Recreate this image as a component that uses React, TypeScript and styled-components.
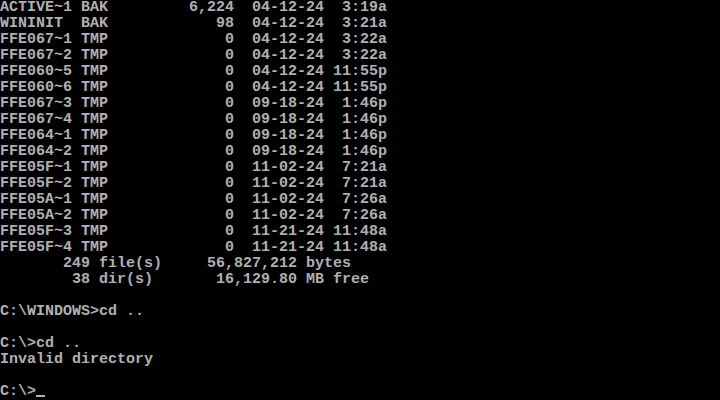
import React from "react"
import styled, { createGlobalStyle } from "styled-components"

const GlobalStyle = createGlobalStyle`
  html,
  body {
    margin: 0;
    padding: 0;
    background: #000000;
  }
`

const Screen = styled.div`
  width: 720px;
  height: 400px;
  overflow: hidden;
  background: #000000;
  color: #b0b0b0;
  font-family: "Liberation Mono", "DejaVu Sans Mono", monospace;
  font-weight: bold;
  font-size: 15px;
  line-height: 16px;
  display: flex;
  flex-direction: column;
`

const Line = styled.div`
  height: 16px;
  white-space: pre;
`

const Cursor = styled.span`
  display: inline-block;
  width: 9px;
  height: 2px;
  background: #b0b0b0;
  vertical-align: -2px;
`

interface Entry {
  name: string
  ext: string
  size: string
  date: string
  time: string
}

const entries: Entry[] = [
  { name: "ACTIVE~1", ext: "BAK", size: "6,224", date: "04-12-24", time: "3:19a" },
  { name: "WININIT", ext: "BAK", size: "98", date: "04-12-24", time: "3:21a" },
  { name: "FFE067~1", ext: "TMP", size: "0", date: "04-12-24", time: "3:22a" },
  { name: "FFE067~2", ext: "TMP", size: "0", date: "04-12-24", time: "3:22a" },
  { name: "FFE060~5", ext: "TMP", size: "0", date: "04-12-24", time: "11:55p" },
  { name: "FFE060~6", ext: "TMP", size: "0", date: "04-12-24", time: "11:55p" },
  { name: "FFE067~3", ext: "TMP", size: "0", date: "09-18-24", time: "1:46p" },
  { name: "FFE067~4", ext: "TMP", size: "0", date: "09-18-24", time: "1:46p" },
  { name: "FFE064~1", ext: "TMP", size: "0", date: "09-18-24", time: "1:46p" },
  { name: "FFE064~2", ext: "TMP", size: "0", date: "09-18-24", time: "1:46p" },
  { name: "FFE05F~1", ext: "TMP", size: "0", date: "11-02-24", time: "7:21a" },
  { name: "FFE05F~2", ext: "TMP", size: "0", date: "11-02-24", time: "7:21a" },
  { name: "FFE05A~1", ext: "TMP", size: "0", date: "11-02-24", time: "7:26a" },
  { name: "FFE05A~2", ext: "TMP", size: "0", date: "11-02-24", time: "7:26a" },
  { name: "FFE05F~3", ext: "TMP", size: "0", date: "11-21-24", time: "11:48a" },
  { name: "FFE05F~4", ext: "TMP", size: "0", date: "11-21-24", time: "11:48a" },
]

// same column layout as DOS dir: 8.3 name, size right-aligned to col 26
const formatEntry = (e: Entry) =>
  `${e.name.padEnd(8)} ${e.ext}${e.size.padStart(14)}  ${e.date} ${e.time.padStart(6)}`

const tail = [
  "       249 file(s)     56,827,212 bytes",
  "        38 dir(s)       16,129.80 MB free",
  "",
  "C:\\WINDOWS>cd ..",
  "",
  "C:\\>cd ..",
  "Invalid directory",
  "",
]

export default function App() {
  return (
    <>
      <GlobalStyle />
      <Screen>
        {entries.map((e) => (
          <Line key={e.name}>{formatEntry(e)}</Line>
        ))}
        {tail.map((text, i) => (
          <Line key={`t-${i}`}>{text}</Line>
        ))}
        <Line>
          C:\&gt;
          <Cursor />
        </Line>
      </Screen>
    </>
  )
}
